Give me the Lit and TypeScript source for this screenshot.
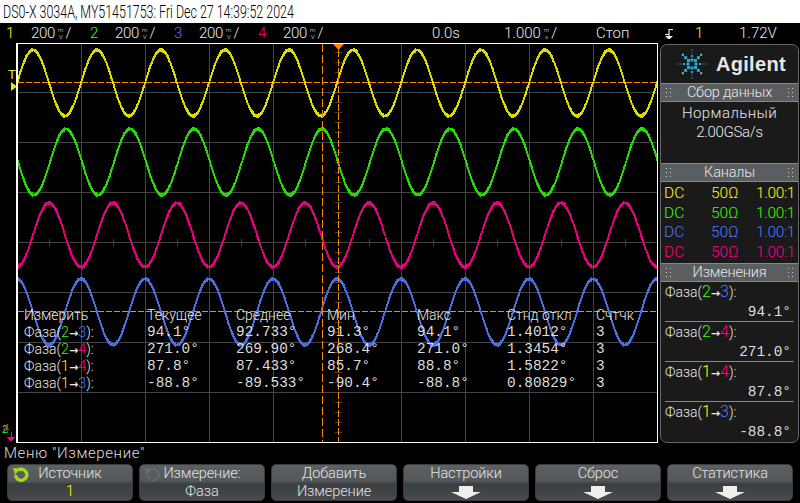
import { LitElement, html, svg, css } from 'lit';
import { customElement } from 'lit/decorators.js';

const COLORS: Record<string, string> = { '1': '#ffff00', '2': '#33ff00', '3': '#5577ff', '4': '#ff0080' };

// peak x is where the channel tops out, centre/amp are in page pixels
const WAVES = [
  { color: '#dcdc00', peak: 33, center: 83, amp: 33 },
  { color: '#22dd00', peak: 66, center: 162, amp: 33 },
  { color: '#e6007e', peak: 49, center: 235, amp: 32 },
  { color: '#4a6ee0', peak: 17, center: 312, amp: 33 }
];

const MEASUREMENTS = [
  { from: '2', to: '3', cur: '94.1°', avg: '92.733°', min: '91.3°', max: '94.1°', dev: '1.4012°', cnt: '3' },
  { from: '2', to: '4', cur: '271.0°', avg: '269.90°', min: '268.4°', max: '271.0°', dev: '1.3454°', cnt: '3' },
  { from: '1', to: '4', cur: '87.8°', avg: '87.433°', min: '85.7°', max: '88.8°', dev: '1.5822°', cnt: '3' },
  { from: '1', to: '3', cur: '-88.8°', avg: '-89.533°', min: '-90.4°', max: '-88.8°', dev: '0.80829°', cnt: '3' }
];

const range = (start: number, end: number, step: number) => {
  const out: number[] = [];
  for (let v = start; v <= end; v += step) out.push(v);
  return out;
};

// each column is one rect spanning the sample and its neighbour, so peaks come out fat like on the scope
function wavePath(peak: number, center: number, amp: number) {
  const y = (x: number) => center - amp * Math.cos((2 * Math.PI * (x - peak)) / 64);
  let d = '';
  for (let x = 18; x < 657; x++) {
    const jitter = ((x * 7919) % 13) / 13;
    const top = Math.round(Math.min(y(x), y(x + 1)) - 1.2 - jitter);
    const bottom = Math.round(Math.max(y(x), y(x + 1)) + 1.2 + jitter * 0.8);
    d += `M${x} ${top}h1v${bottom - top}h-1z`;
  }
  return d;
}

function starburst() {
  const dots = [];
  for (let i = 0; i < 8; i++) {
    const a = (i * Math.PI) / 4;
    const diag = i % 2 === 1;
    const radii = diag ? [5, 9, 13] : [4, 8, 11, 14];
    for (const r of radii) {
      const s = r < 6 ? 3 : r < 10 ? (diag ? 3 : 2) : diag ? 2 : 1;
      const x = 15 + Math.cos(a) * r - s / 2;
      const y = 15 + Math.sin(a) * r - s / 2;
      dots.push(svg`<rect x=${x.toFixed(1)} y=${y.toFixed(1)} width=${s} height=${s} fill=${r > 12 ? '#7fc4dc' : '#2aa6cf'}></rect>`);
    }
  }
  return dots;
}

const grip = html`<svg class="grip" width="5" height="9" viewBox="0 0 5 9">
  ${[0, 4, 8].map((y) => svg`<rect x="0" y=${y} width="1" height="1" fill="#ccc"></rect><rect x="4" y=${y} width="1" height="1" fill="#ccc"></rect>`)}
</svg>`;

const downArrow = html`<svg class="arrow" width="30" height="13" viewBox="0 0 30 13"><polygon points="8,0 22,0 22,6 30,6 15,13 0,6 8,6" fill="#eee"></polygon></svg>`;

const cycleIcon = (color: string, weight: number) => html`<svg class="cycle" width="18" height="16" viewBox="0 0 18 16">
  <path d="M6 3.2 A5.6 5.6 0 1 1 3.6 8" fill="none" stroke=${color} stroke-width=${weight}></path>
  <polygon points="1,1 8,1.5 3,8" fill=${color}></polygon>
</svg>`;

const phase = (from: string, to: string) => html`Фаза(<span class="ch" style="color:${COLORS[from]}">${from}</span><span class="to">→</span><span class="ch" style="color:${COLORS[to]}">${to}</span>):`;

@customElement('app-root')
export class AppRoot extends LitElement {
  static styles = css`
    :host {
      display: block;
      width: 800px;
      height: 503px;
      overflow: hidden;
      background: #000;
      color: #e8e8e8;
      font-family: Roboto, 'Liberation Sans', Arial, sans-serif;
      font-weight: 300;
      font-size: 14px;
    }
    .title {
      height: 23px;
      background: #fff;
      color: #000;
      font-size: 18px;
      line-height: 23px;
      padding-left: 3px;
      white-space: nowrap;
    }
    .title span {
      display: inline-block;
      transform: scaleX(0.69);
      transform-origin: left center;
    }
    .status {
      display: flex;
      height: 20px;
      align-items: center;
      font-size: 15px;
      white-space: nowrap;
      padding-left: 6px;
    }
    .status > span {
      display: inline-flex;
      align-items: center;
      flex: none;
    }
    .num { width: 25px; }
    .scale { width: 59px; letter-spacing: -0.3px; }
    .unit {
      display: inline-flex;
      flex-direction: column;
      font-size: 6px;
      line-height: 7px;
      letter-spacing: 0;
      text-align: center;
      margin: 0 2px 0 3px;
    }
    .middle {
      display: flex;
      height: 400px;
    }
    .scope {
      position: relative;
      width: 660px;
      flex: none;
    }
    .scope > svg { display: block; }
    .measure {
      position: absolute;
      left: 24px;
      top: 264px;
      display: grid;
      grid-template-columns: 123px 89px 91px 90px 90px 89px 40px;
      grid-auto-rows: 17px;
      line-height: 17px;
      white-space: nowrap;
    }
    .measure .ch { font-size: 14.4px; }
    .mono, .value {
      font-family: 'Liberation Mono', monospace;
      font-weight: 400;
      font-size: 14.4px;
      color: #ddd;
    }
    .ch { font-size: 16px; line-height: 1; }
    .to {
      font-family: 'DejaVu Sans', sans-serif;
      font-weight: 700;
      font-size: 11px;
    }
    .side {
      width: 139px;
      height: 399px;
      margin-top: 1px;
      flex: none;
      box-sizing: border-box;
      background: #1a1a1a;
      border: 1px solid #666;
      border-radius: 7px;
      display: flex;
      flex-direction: column;
      overflow: hidden;
    }
    .logo {
      height: 38px;
      flex: none;
      display: flex;
      align-items: center;
      padding-left: 16px;
      gap: 9px;
      font-family: 'Liberation Sans', Arial, sans-serif;
      font-size: 20px;
      font-weight: bold;
      color: #e6e6e6;
      letter-spacing: 0.3px;
    }
    .head {
      height: 19px;
      flex: none;
      box-sizing: border-box;
      background: #5a5e60;
      border-top: 1px solid #888;
      border-bottom: 1px solid #888;
      display: flex;
      align-items: center;
      justify-content: space-between;
      padding: 0 5px;
      font-size: 14.5px;
      letter-spacing: -0.2px;
      color: #e8e8e8;
    }
    .acq {
      height: 61px;
      flex: none;
      text-align: center;
      line-height: 19px;
      padding-top: 2px;
      box-sizing: border-box;
      font-size: 15px;
      letter-spacing: 0.4px;
    }
    .acq span { letter-spacing: -0.3px; }
    .channels {
      height: 81px;
      flex: none;
      box-sizing: border-box;
      padding: 1px 4px 0 3px;
      display: grid;
      grid-template-columns: 47px 45px 1fr;
      grid-auto-rows: 19.5px;
      line-height: 20px;
      font-size: 15.5px;
    }
    .channels .ratio { text-align: right; letter-spacing: -0.4px; }
    .change {
      height: 40px;
      flex: none;
      box-sizing: border-box;
      margin: 0 4px 0 4px;
      border-bottom: 1px solid #888;
      line-height: 19px;
      padding-top: 1px;
    }
    .change:last-child { border-bottom: none; }
    .change .value { text-align: right; padding-right: 3px; }
    .menu {
      height: 21px;
      line-height: 21px;
      padding-left: 4px;
      font-size: 15px;
      letter-spacing: 0.6px;
      color: #ddd;
    }
    .keys {
      display: flex;
      gap: 6px;
      padding-left: 7px;
    }
    .key {
      position: relative;
      width: 126px;
      height: 37px;
      flex: none;
      box-sizing: border-box;
      border-radius: 5px;
      border: 1px solid #3a3d3f;
      background: linear-gradient(#5c6062 0%, #54585a 45%, #3a3e40 55%, #474b4d 100%);
      text-align: center;
      font-size: 14.5px;
      letter-spacing: -0.1px;
      line-height: 18px;
      color: #e4e4e4;
      display: flex;
      flex-direction: column;
      align-items: center;
    }
    .key .cycle {
      position: absolute;
      left: 4px;
      top: 2px;
    }
    .key .arrow { margin-top: 3px; }
    .grip { flex: none; }
  `;

  renderScope() {
    const gridX = range(81, 593, 64).filter((x) => x !== 337);
    return html`<svg width="660" height="400" viewBox="0 43 660 400" shape-rendering="crispEdges">
      <g fill="#444">
        ${gridX.map((x) => svg`<rect x=${x} y="44" width="1" height="398"></rect>`)}
        ${range(92, 392, 50).map((y) => svg`<rect x="18" y=${y} width="639" height="1"></rect>`)}
        ${range(49, 657, 64).map((x) => svg`<rect x=${x} y="239" width="1" height="7"></rect>`)}
        ${range(52, 432, 10).map((y) => svg`<rect x="335" y=${y} width="7" height="1"></rect>`)}
      </g>
      ${WAVES.map((w) => svg`<path d=${wavePath(w.peak, w.center, w.amp)} fill=${w.color}></path>`)}
      <g stroke="#ff8800" stroke-width="1" fill="none">
        <path d="M18 82.5H657" stroke-dasharray="6 2"></path>
        <path d="M18 311.5H657" stroke-dasharray="6 2"></path>
        <path d="M322.5 44V442" stroke-dasharray="8 3"></path>
        <path d="M338.5 50V442" stroke-dasharray="7 2"></path>
      </g>
      <polygon points="333,44 344,44 338.5,50" fill="#ff8800" shape-rendering="auto"></polygon>
      <g fill="#fff">
        <rect x="16" y="43" width="2" height="400"></rect>
        <rect x="16" y="43" width="642" height="1"></rect>
        <rect x="16" y="442" width="642" height="1"></rect>
        <rect x="657" y="43" width="1" height="400"></rect>
      </g>
      <text x="8" y="79" fill="#e8e800" font-family="Liberation Sans" font-size="13">T</text>
      <polygon points="11,82 17,86.5 11,91" fill="#e8e800" shape-rendering="auto"></polygon>
      <text x="2" y="433" fill="#33ff00" font-family="Liberation Sans" font-size="11">2</text>
      <text x="3" y="432" fill="#ff0080" font-family="Liberation Sans" font-size="11">4</text>
      <path d="M11 432v5M7 437h8l-4 4z" fill="#ff0080" stroke="#ff0080" stroke-width="1"></path>
    </svg>`;
  }

  render() {
    return html`
      <div class="title"><span>DS0-X 3034A, MY51451753: Fri Dec 27 14:39:52 2024</span></div>
      <div class="status">
        ${['1', '2', '3', '4'].map(
          (c) => html`<span class="num" style="color:${COLORS[c]}">${c}</span>
            <span class="scale">200<span class="unit"><span>m</span><span>V</span></span>/</span>`
        )}
        <span style="margin-left:90px;width:72px">0.0s</span>
        <span style="width:92px">1.000<span class="unit"><span>m</span><span>s</span></span>/</span>
        <span style="width:70px">Стоп</span>
        <svg width="9" height="11" viewBox="0 0 9 11" style="flex:none;margin-right:21px;margin-left:-1px"><path d="M0 6.5H4V1.5H8M4 1V10M1.5 8.5h5l-2.5 2.5z" fill="none" stroke="#eee" stroke-width="1.2"></path></svg>
        <span style="width:44px;color:#ffff00">1</span>
        <span>1.72V</span>
      </div>
      <div class="middle">
        <div class="scope">
          ${this.renderScope()}
          <div class="measure">
            <span>Измерить</span><span>Текущее</span><span>Среднее</span><span>Мин</span><span>Макс</span><span>Стнд откл</span><span>Счтчк</span>
            ${MEASUREMENTS.map(
              (m) => html`<span>${phase(m.from, m.to)}</span>
                <span class="mono">${m.cur}</span><span class="mono">${m.avg}</span><span class="mono">${m.min}</span>
                <span class="mono">${m.max}</span><span class="mono">${m.dev}</span><span class="mono">${m.cnt}</span>`
            )}
          </div>
        </div>
        <div class="side">
          <div class="logo">
            <svg width="30" height="30" viewBox="0 0 30 30">${starburst()}</svg>
            <span>Agilent</span>
          </div>
          <div class="head">${grip}<span>Сбор данных</span>${grip}</div>
          <div class="acq">Нормальный<br /><span>2.00GSa/s</span></div>
          <div class="head">${grip}<span>Каналы</span>${grip}</div>
          <div class="channels">
            ${['1', '2', '3', '4'].map(
              (c) => html`<span style="color:${COLORS[c]}">DC</span><span style="color:${COLORS[c]}">50Ω</span><span class="ratio" style="color:${COLORS[c]}">1.00:1</span>`
            )}
          </div>
          <div class="head">${grip}<span>Изменения</span>${grip}</div>
          ${MEASUREMENTS.map(
            (m) => html`<div class="change"><div>${phase(m.from, m.to)}</div><div class="value">${m.cur}</div></div>`
          )}
        </div>
      </div>
      <div class="menu">Меню "Измерение"</div>
      <div class="keys">
        <div class="key">${cycleIcon('#a4d81c', 3.4)}<span>Источник</span><span style="color:#ffff00">1</span></div>
        <div class="key">${cycleIcon('#6a6e70', 1.4)}<span>Измерение:</span><span>Фаза</span></div>
        <div class="key"><span>Добавить</span><span>Измерение</span></div>
        <div class="key"><span>Настройки</span>${downArrow}</div>
        <div class="key"><span>Сброс</span>${downArrow}</div>
        <div class="key"><span>Статистика</span>${downArrow}</div>
      </div>
    `;
  }
}
